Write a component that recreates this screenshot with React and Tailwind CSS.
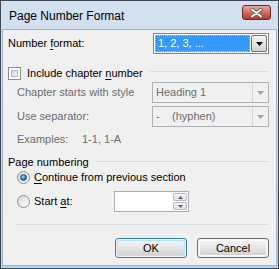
function Arrow({ color = '#000000' }) {
    return (
        <svg width="7" height="4" viewBox="0 0 7 4">
            <path d="M0 0h7L3.5 4z" fill={color} />
        </svg>
    );
}

function Checkbox() {
    return (
        <span className="block h-[13px] w-[13px] border border-[#8e8f8f] bg-white p-[2px]">
            <span className="block h-full w-full border border-[#b4b8bd] bg-gradient-to-br from-[#d2d5d9] to-[#f7f7f7]" />
        </span>
    );
}

function Radio({ checked = false }) {
    return (
        <span className="flex h-[13px] w-[13px] items-center justify-center rounded-full border border-[#8e8f8f] bg-gradient-to-br from-[#d6d8db] to-[#fbfbfb]">
            {checked && (
                <span className="block h-[7px] w-[7px] rounded-full border border-[#1d4f80] bg-[radial-gradient(circle_at_40%_35%,#9bdcfb,#2a7fc2_55%,#0f4c84)]" />
            )}
        </span>
    );
}

function DisabledSelect({ children }) {
    return (
        <div className="ml-auto flex h-[21px] w-[117px] border border-[#adb2b5] bg-[#f0f0f0]">
            <div className="flex flex-1 items-center pl-[3px] text-[#6d6d6d]">
                {children}
            </div>
            <div className="flex w-[16px] items-center justify-center border-l border-[#d5d5d5]">
                <Arrow color="#a3a3a3" />
            </div>
        </div>
    );
}

function Button({ children, primary = false }) {
    return (
        <div
            className={
                primary
                    ? 'h-[20px] w-[72px] rounded-[3px] border border-[#3c7fb1] p-px'
                    : 'h-[20px] w-[72px] rounded-[3px] border border-[#707070] p-px'
            }
        >
            <div
                className={
                    primary
                        ? 'flex h-full items-center justify-center rounded-[2px] border border-[#b9e2f8] bg-gradient-to-b from-[#f2f2f2] via-[#e6e6e6] to-[#d2d2d2] text-black'
                        : 'flex h-full items-center justify-center rounded-[2px] border border-[#fcfcfc] bg-gradient-to-b from-[#f2f2f2] via-[#e6e6e6] to-[#d2d2d2] text-black'
                }
            >
                {children}
            </div>
        </div>
    );
}

export default function App() {
    return (
        <div className="flex h-[269px] w-[279px] flex-col border border-[#3d4652] bg-gradient-to-b from-[#d3e0ef] via-[#c9daee] to-[#a9d6f2] px-px pb-[2px] font-['Liberation_Sans',Arial,sans-serif] text-[11px] leading-[13px] text-black">
            {/* title bar */}
            <div className="flex h-[28px] items-start">
                <div className="mt-[9px] pl-[7px] text-[12px] leading-[12px]">
                    Page Number Format
                </div>
                <div className="mr-[6px] ml-auto mt-[4px] flex h-[15px] w-[29px] items-center justify-center rounded-[3px] border border-[#6b2a22] bg-gradient-to-b from-[#e9a99a] via-[#d26a5a] to-[#b8392b]">
                    <svg width="13" height="10" viewBox="0 0 13 10">
                        <path d="M2 1.5l9 7M11 1.5l-9 7" stroke="#5a5a5a" strokeWidth="3.6" strokeLinecap="round" />
                        <path d="M2 1.5l9 7M11 1.5l-9 7" stroke="#ffffff" strokeWidth="2" strokeLinecap="round" />
                    </svg>
                </div>
            </div>

            {/* client */}
            <div className="flex flex-1 flex-col border border-[#9fb3c9] bg-[#f0f0f0] pt-[3px] pr-[7px] pl-[5px]">
                <div className="flex h-[21px] items-center">
                    <span>
                        Number <span className="underline underline-offset-2">f</span>ormat:
                    </span>
                    <div className="ml-auto flex h-[21px] w-[116px] border border-[#828790] bg-white p-px">
                        <div className="flex flex-1 items-center border border-dotted border-[#9ccbff] bg-[#3399ff] pl-[2px] text-white">
                            1, 2, 3, ...
                        </div>
                        <div className="ml-px flex w-[16px] items-center justify-center rounded-[2px] border border-[#707070] bg-gradient-to-b from-[#f3f3f3] via-[#e8e8e8] to-[#d0d0d0]">
                            <Arrow />
                        </div>
                    </div>
                </div>

                <div className="mt-[12px] flex h-[15px] items-center">
                    <Checkbox />
                    <span className="ml-[6px]">
                        Include chapter <span className="underline underline-offset-2">n</span>umber
                    </span>
                    <div className="mt-[5px] ml-auto h-px w-[119px] self-start bg-[#d5dfe5]" />
                </div>

                <div className="mt-px flex h-[21px] items-center">
                    <span className="ml-[9px] text-[#6d6d6d]">Chapter starts with style</span>
                    <DisabledSelect>Heading 1</DisabledSelect>
                </div>

                <div className="mt-[3px] flex h-[21px] items-center">
                    <span className="ml-[9px] text-[#6d6d6d]">Use separator:</span>
                    <DisabledSelect>
                        <span className="w-[16px]">-</span>
                        <span>(hyphen)</span>
                    </DisabledSelect>
                </div>

                <div className="mt-[6px] flex h-[13px] items-center text-[#6d6d6d]">
                    <span className="ml-[9px] w-[65px]">Examples:</span>
                    <span>1-1, 1-A</span>
                </div>

                <div className="mt-[10px] flex h-[13px] items-center">
                    <span>Page numbering</span>
                    <div className="mt-[5px] ml-[7px] h-px flex-1 self-start bg-[#d5dfe5]" />
                </div>

                <div className="mt-[2px] ml-[9px] flex h-[13px] items-center gap-[4px]">
                    <Radio checked />
                    <span>
                        <span className="underline underline-offset-2">C</span>ontinue from previous section
                    </span>
                </div>

                <div className="mt-[7px] ml-[9px] flex h-[21px] items-center gap-[4px]">
                    <Radio />
                    <span className="w-[76px]">
                        Start <span className="underline underline-offset-2">a</span>t:
                    </span>
                    <div className="flex h-[21px] w-[75px] border border-[#abadb3] bg-white">
                        <div className="flex-1" />
                        <div className="flex w-[16px] flex-col gap-px p-px">
                            <div className="flex flex-1 items-center justify-center rounded-[2px] border border-[#bcbcbc] bg-gradient-to-b from-[#f7f7f7] to-[#e3e3e3]">
                                <svg width="5" height="3" viewBox="0 0 5 3">
                                    <path d="M0 3h5L2.5 0z" fill="#4d6185" />
                                </svg>
                            </div>
                            <div className="flex flex-1 items-center justify-center rounded-[2px] border border-[#bcbcbc] bg-gradient-to-b from-[#f7f7f7] to-[#e3e3e3]">
                                <svg width="5" height="3" viewBox="0 0 5 3">
                                    <path d="M0 0h5L2.5 3z" fill="#4d6185" />
                                </svg>
                            </div>
                        </div>
                    </div>
                </div>

                <div className="mt-[12px] ml-[8px] h-px bg-[#d5dfe5]" />

                <div className="mt-[13px] flex justify-end gap-[10px]">
                    <Button primary>OK</Button>
                    <Button>Cancel</Button>
                </div>
            </div>
        </div>
    );
}
